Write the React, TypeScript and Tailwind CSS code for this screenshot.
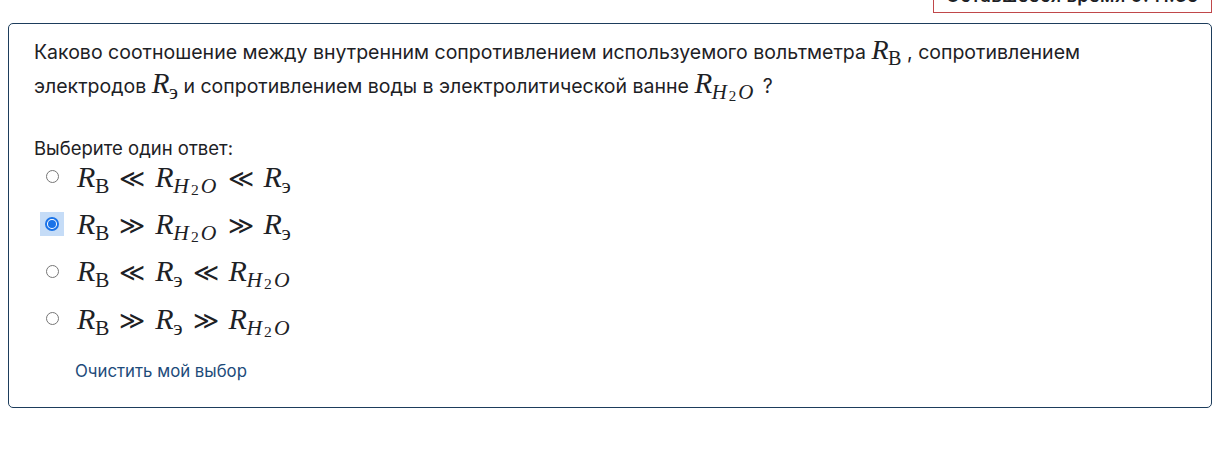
import type { ReactNode } from "react"

const mathFont = "font-['Liberation_Serif',serif]"

function R({ sub, size = "text-[30px]" }: { sub: ReactNode; size?: string }) {
  return (
    <span className={`${mathFont} ${size} inline-flex items-baseline whitespace-nowrap leading-none`}>
      <span className="italic">R</span>
      <span className="relative top-[0.28em] ml-[-0.02em] text-[0.72em]">{sub}</span>
    </span>
  )
}

const H2O = (
  <span className="italic tracking-[0.06em]">
    H<span className="relative top-[0.15em] mx-[0.05em] text-[0.72em] not-italic">2</span>O
  </span>
)

function Rel({ ch }: { ch: string }) {
  return <span className="mx-[10px] font-['DejaVu_Serif',serif] text-[25px] leading-none">{ch}</span>
}

const options = [
  { id: "a", parts: ["В", "≪", "h2o", "≪", "э"], checked: false },
  { id: "b", parts: ["В", "≫", "h2o", "≫", "э"], checked: true },
  { id: "c", parts: ["В", "≪", "э", "≪", "h2o"], checked: false },
  { id: "d", parts: ["В", "≫", "э", "≫", "h2o"], checked: false },
]

function Formula({ parts }: { parts: string[] }) {
  return (
    <span className="flex items-baseline">
      {parts.map((p, i) =>
        p === "≪" || p === "≫" ? (
          <Rel key={i} ch={p} />
        ) : (
          <R key={i} sub={p === "h2o" ? H2O : p} />
        )
      )}
    </span>
  )
}

function Radio({ checked }: { checked: boolean }) {
  if (checked) {
    return (
      <span className="flex h-[24px] w-[24px] items-center justify-center bg-[#c5dcf7]">
        <span className="flex h-[14px] w-[14px] items-center justify-center rounded-full border-2 border-[#1a73e8] bg-white">
          <span className="h-[8px] w-[8px] rounded-full bg-[#1a73e8]" />
        </span>
      </span>
    )
  }
  return (
    <span className="flex h-[24px] w-[24px] items-center justify-center">
      <span className="h-[13px] w-[13px] rounded-full border border-[#767676] bg-white" />
    </span>
  )
}

export default function App() {
  return (
    <div className="min-h-screen bg-white font-['Inter',sans-serif] text-[#1d2125]">
      {/* timer box, scrolled mostly off the top */}
      <div className="flex justify-end pr-[13px]">
        <div className="mt-[-22px] flex h-[35px] w-[279px] items-center justify-center border border-[#c0474a] text-[18px] font-semibold tracking-wide">
          Оставшееся время 0:41:35
        </div>
      </div>

      {/* question card */}
      <div className="mt-[10px] ml-[8px] mr-[13px] h-[385px] rounded-[5px] border border-[#1d3d5c] px-[25px] pt-[12px]">
        <p className="text-[19.5px] leading-[33px]">
          Каково соотношение между внутренним сопротивлением используемого вольтметра{" "}
          <R sub="В" size="text-[28px]" /> , сопротивлением электродов <R sub="э" size="text-[29px]" /> и
          сопротивлением воды в электролитической ванне <R sub={H2O} size="text-[29px]" />
          <span className="ml-[8px]">?</span>
        </p>

        <div className="mt-[34px] text-[18.5px] leading-[22px]">Выберите один ответ:</div>

        <div className="mt-[-6px] flex flex-col">
          {options.map((o, i) => (
            <label
              key={o.id}
              className={`flex items-center gap-[13px] pl-[6px] ${i === 2 ? "h-[48px]" : "h-[47px]"}`}
            >
              <Radio checked={o.checked} />
              <Formula parts={o.parts} />
            </label>
          ))}
        </div>

        <div className="mt-[19px] pl-[41px] text-[16.8px] leading-[20px] text-[#1d4b7a]">Очистить мой выбор</div>
      </div>
    </div>
  )
}
